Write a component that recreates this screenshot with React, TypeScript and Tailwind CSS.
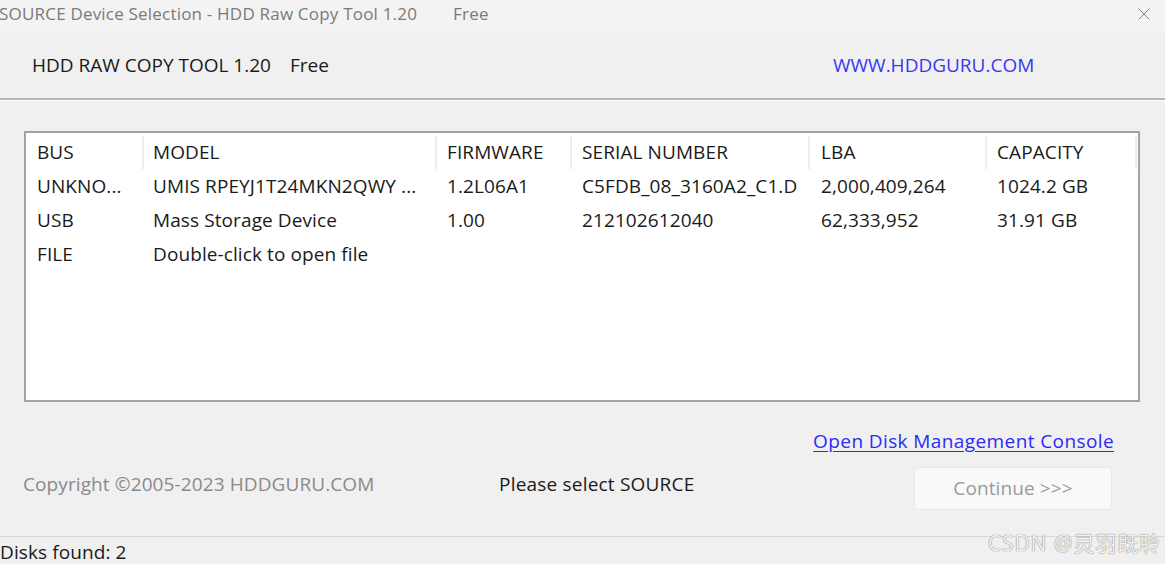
import { X } from "lucide-react";

const cols = [
  { name: "BUS", w: "w-[118px]", pl: "pl-[11px]" },
  { name: "MODEL", w: "w-[293px]", pl: "pl-[9px]" },
  { name: "FIRMWARE", w: "w-[135px]", pl: "pl-[10px]" },
  { name: "SERIAL NUMBER", w: "w-[238px]", pl: "pl-[10px]" },
  { name: "LBA", w: "w-[177px]", pl: "pl-[11px]" },
  { name: "CAPACITY", w: "w-[150px]", pl: "pl-[10px]" },
];

const rows = [
  ["UNKNO...", "UMIS RPEYJ1T24MKN2QWY ...", "1.2L06A1", "C5FDB_08_3160A2_C1.D", "2,000,409,264", "1024.2 GB"],
  ["USB", "Mass Storage Device", "1.00", "212102612040", "62,333,952", "31.91 GB"],
  ["FILE", "Double-click to open file", "", "", "", ""],
];

export default function App() {
  return (
    <div
      className="relative flex h-[564px] w-[1165px] flex-col overflow-hidden bg-[#f0f0f0] text-[#1a1a1a]"
      style={{ fontFamily: '"Open Sans", "Noto Sans", "Noto Sans CJK SC", sans-serif' }}
    >
      {/* title bar */}
      <div className="flex h-[32px] items-center justify-between bg-[#f3f3f3] pb-[4px]">
        <div className="-ml-[1px] flex text-[17px] tracking-[0.2px] text-[#7a7a7a]">
          <span>SOURCE Device Selection - HDD Raw Copy Tool 1.20</span>
          <span className="ml-[36px]">Free</span>
        </div>
        <X className="mr-[11px] h-[20px] w-[20px] text-[#8a8a8a]" strokeWidth={1.2} />
      </div>

      {/* header */}
      <div className="flex h-[68px] items-center border-b-2 border-[#b4b4b4]">
        <div className="ml-[32px] flex w-[801px] text-[19px] tracking-[0px] text-[#1a1a1a]">
          <span>HDD RAW COPY TOOL 1.20</span>
          <span className="ml-[19px]">Free</span>
        </div>
        <div className="text-[19px] tracking-[0px] text-[#3838f0]">WWW.HDDGURU.COM</div>
      </div>
      <div className="h-px bg-white" />

      {/* device list */}
      <div className="mx-[24px] mt-[30px] h-[271px] w-[1116px] border-2 border-[#a0a4aa] bg-white">
        <div className="flex h-[36px] pt-[3px]">
          {cols.map((c) => (
            <div
              key={c.name}
              className={`${c.w} ${c.pl} flex items-center border-r-2 border-[#ececec] text-[19px] tracking-[0.1px]`}
            >
              {c.name}
            </div>
          ))}
        </div>
        {rows.map((r, i) => (
          <div key={i} className="flex h-[34px] pt-[1px]">
            {r.map((cell, j) => (
              <div
                key={j}
                className={`${cols[j].w} ${cols[j].pl} flex items-center whitespace-nowrap text-[19px] tracking-[0.1px]`}
              >
                {cell}
              </div>
            ))}
          </div>
        ))}
      </div>

      {/* bottom area */}
      <div className="flex h-[134px] flex-col">
        <div className="mt-[25px] flex justify-end pr-[51px]">
          <span className="text-[19px] tracking-[0.4px] text-[#2b2bf5] underline underline-offset-[3px]">
            Open Disk Management Console
          </span>
        </div>
        <div className="mt-[11px] flex items-start">
          <div className="ml-[23px] mt-[5px] w-[476px] text-[19px] leading-[24px] tracking-[0.1px] text-[#8a8a8a]">
            Copyright ©2005-2023 HDDGURU.COM
          </div>
          <div className="mt-[5px] w-[415px] text-[19px] leading-[24px] tracking-[0.2px] text-[#1a1a1a]">
            Please select SOURCE
          </div>
          <button className="flex h-[43px] w-[198px] items-center justify-center rounded-[4px] border border-[#e8e8e8] bg-[#f9f9f9] text-[19px] tracking-[0.1px] text-[#9a9a9a]">
            Continue &gt;&gt;&gt;
          </button>
        </div>
      </div>

      {/* status bar */}
      <div className="flex h-[27px] items-end border-t border-[#d8d8d8]">
        <span className="text-[19px] leading-[21px] tracking-[0.1px]">Disks found: 2</span>
      </div>

      <div
        className="absolute bottom-[5px] right-[4px] text-[21px] tracking-[0.9px] text-[#f2f2f2]"
        style={{ textShadow: "0 0 1px #8a8a8a, 0 0 1px #8a8a8a" }}
      >
        CSDN @灵羽既聆
      </div>
    </div>
  );
}
